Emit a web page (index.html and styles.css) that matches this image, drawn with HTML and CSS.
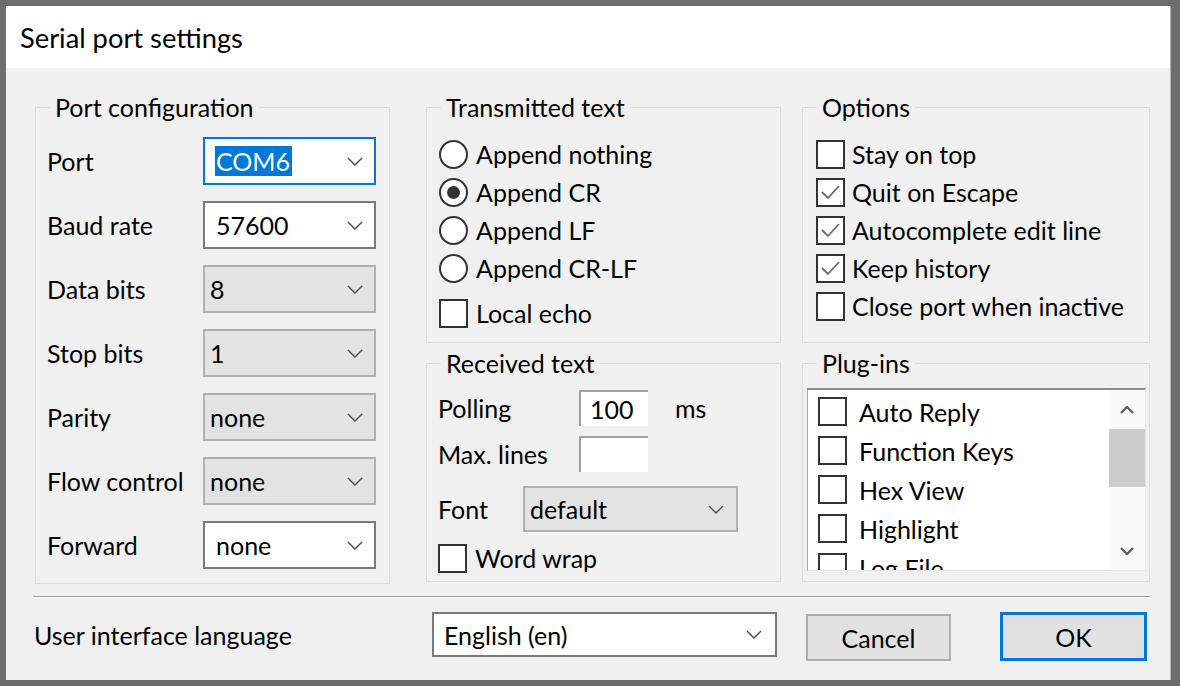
FILE: index.html
```html
<!DOCTYPE html>
<html>
<head>
<meta charset="utf-8">
<title>Serial port settings</title>
<link rel="stylesheet" href="styles.css">
</head>
<body>
<div class="dialog">
  <div class="titlebar">Serial port settings</div>
  <div class="content">
    <div class="groups">
      <div class="group port">
        <div class="gtitle">Port configuration</div>
        <div class="rows">
          <div class="row"><span class="lbl">Port</span><div class="combo focus"><span class="sel">COM6</span><svg class="chev" viewBox="0 0 16 9"><polyline points="1,1 8,8 15,1"/></svg></div></div>
          <div class="row"><span class="lbl">Baud rate</span><div class="combo"><span>57600</span><svg class="chev" viewBox="0 0 16 9"><polyline points="1,1 8,8 15,1"/></svg></div></div>
          <div class="row"><span class="lbl">Data bits</span><div class="combo dis"><span>8</span><svg class="chev" viewBox="0 0 16 9"><polyline points="1,1 8,8 15,1"/></svg></div></div>
          <div class="row"><span class="lbl">Stop bits</span><div class="combo dis"><span>1</span><svg class="chev" viewBox="0 0 16 9"><polyline points="1,1 8,8 15,1"/></svg></div></div>
          <div class="row"><span class="lbl">Parity</span><div class="combo dis"><span>none</span><svg class="chev" viewBox="0 0 16 9"><polyline points="1,1 8,8 15,1"/></svg></div></div>
          <div class="row"><span class="lbl">Flow control</span><div class="combo dis"><span>none</span><svg class="chev" viewBox="0 0 16 9"><polyline points="1,1 8,8 15,1"/></svg></div></div>
          <div class="row"><span class="lbl">Forward</span><div class="combo"><span>none</span><svg class="chev" viewBox="0 0 16 9"><polyline points="1,1 8,8 15,1"/></svg></div></div>
        </div>
      </div>

      <div class="col mid">
        <div class="group tx">
          <div class="gtitle">Transmitted text</div>
          <div class="opts">
            <div class="opt"><span class="radio"></span><span>Append nothing</span></div>
            <div class="opt"><span class="radio on"></span><span>Append CR</span></div>
            <div class="opt"><span class="radio"></span><span>Append LF</span></div>
            <div class="opt"><span class="radio"></span><span>Append CR-LF</span></div>
            <div class="opt echo"><span class="check"></span><span>Local echo</span></div>
          </div>
        </div>
        <div class="group rx">
          <div class="gtitle">Received text</div>
          <div class="frow first"><span class="flbl">Polling</span><span class="field">100</span><span class="unit">ms</span></div>
          <div class="frow"><span class="flbl">Max. lines</span><span class="field"></span></div>
          <div class="frow font"><span class="fontlbl">Font</span><div class="combo dis fontcombo"><span>default</span><svg class="chev" viewBox="0 0 16 9"><polyline points="1,1 8,8 15,1"/></svg></div></div>
          <div class="opt wrap"><span class="check"></span><span>Word wrap</span></div>
        </div>
      </div>

      <div class="col right">
        <div class="group options">
          <div class="gtitle">Options</div>
          <div class="opts">
            <div class="opt"><span class="check"></span><span>Stay on top</span></div>
            <div class="opt"><span class="check"><svg class="tick" viewBox="0 0 25 25"><polyline points="4,12 10,18 21,6"/></svg></span><span>Quit on Escape</span></div>
            <div class="opt"><span class="check"><svg class="tick" viewBox="0 0 25 25"><polyline points="4,12 10,18 21,6"/></svg></span><span>Autocomplete edit line</span></div>
            <div class="opt"><span class="check"><svg class="tick" viewBox="0 0 25 25"><polyline points="4,12 10,18 21,6"/></svg></span><span>Keep history</span></div>
            <div class="opt"><span class="check"></span><span>Close port when inactive</span></div>
          </div>
        </div>
        <div class="group plugins">
          <div class="gtitle">Plug-ins</div>
          <div class="listbox">
            <div class="items">
              <div class="item"><span class="check"></span><span>Auto Reply</span></div>
              <div class="item"><span class="check"></span><span>Function Keys</span></div>
              <div class="item"><span class="check"></span><span>Hex View</span></div>
              <div class="item"><span class="check"></span><span>Highlight</span></div>
              <div class="item"><span class="check"></span><span>Log File</span></div>
            </div>
            <div class="scrollbar">
              <div class="sbtn"><svg class="arrow" viewBox="0 0 14 8"><polyline points="1,7 7,1 13,7"/></svg></div>
              <div class="thumb"></div>
              <div class="track"></div>
              <div class="sbtn down"><svg class="arrow" viewBox="0 0 14 8"><polyline points="1,1 7,7 13,1"/></svg></div>
            </div>
          </div>
        </div>
      </div>
    </div>

    <div class="sep"></div>

    <div class="bottom">
      <span class="langlbl">User interface language</span>
      <div class="combo lang"><span>English (en)</span><svg class="chev" viewBox="0 0 16 9"><polyline points="1,1 8,8 15,1"/></svg></div>
      <div class="btn cancel">Cancel</div>
      <div class="btn ok">OK</div>
    </div>
  </div>
</div>
</body>
</html>
```

FILE: styles.css
```css
* { box-sizing: border-box; }

body {
  margin: 0;
  width: 1180px;
  height: 686px;
  overflow: hidden;
  background: #6d6d6d;
  font-family: Lato, "Noto Sans", sans-serif;
  font-size: 25px;
  color: #000;
}

.dialog {
  margin: 6px 0 0 6px;
  width: 1165px;
  height: 674px;
  display: flex;
  flex-direction: column;
  border-right: 1px solid #b4b4b4;
}

.titlebar {
  height: 62px;
  flex: none;
  background: #fff;
  padding-left: 14px;
  font-size: 27.3px;
  display: flex;
  align-items: center;
}

.content {
  flex: 1;
  background: #f0f0f0;
  padding: 39px 0 0 29px;
}

.groups {
  display: flex;
  align-items: flex-start;
}

.group {
  border: 1px solid #dcdcdc;
}

.gtitle {
  width: fit-content;
  height: 30px;
  line-height: 30px;
  margin-top: -16px;
  padding: 0 5px;
  background: #f0f0f0;
  white-space: nowrap;
}

/* Port configuration */
.port {
  width: 355px;
  height: 477px;
  padding: 0 13px 0 11px;
}

.port .gtitle { margin-left: 3px; }

.rows {
  display: flex;
  flex-direction: column;
  gap: 16px;
  margin-top: 15px;
}

.row {
  display: flex;
  align-items: center;
  height: 48px;
}

.lbl {
  width: 156px;
  flex: none;
  white-space: nowrap;
}

.combo {
  width: 173px;
  height: 48px;
  flex: none;
  border: 2px solid #7a7a7a;
  background: #fff;
  display: flex;
  align-items: center;
  justify-content: space-between;
  padding: 0 11px 0 11px;
}

.combo.dis {
  background: #e3e3e3;
  border-color: #b0b0b0;
  padding-left: 5px;
}

.combo.focus {
  border-color: #0078d7;
  padding-left: 10px;
}

.sel {
  background: #0078d7;
  color: #fff;
  line-height: 30px;
  padding: 0 2px 0 1px;
}

.chev {
  width: 16px;
  height: 9px;
  flex: none;
  fill: none;
  stroke: #4a4a4a;
  stroke-width: 1.4;
}

/* columns */
.col {
  display: flex;
  flex-direction: column;
  gap: 20px;
}

.mid {
  margin-left: 36px;
  width: 355px;
}

.right {
  margin-left: 21px;
  width: 348px;
}

/* option lists */
.opts {
  margin-top: 13px;
}

.opt {
  display: flex;
  align-items: center;
  height: 38px;
  gap: 8px;
  white-space: nowrap;
}

.tx {
  height: 236px;
  padding-left: 12px;
}

.tx .gtitle { margin-left: 2px; }

.tx .echo {
  margin-top: 7px;
}

.radio {
  width: 29px;
  height: 29px;
  flex: none;
  border-radius: 50%;
  border: 2px solid #333;
  background: #fff;
  display: flex;
  align-items: center;
  justify-content: center;
}

.radio.on::after {
  content: "";
  width: 13px;
  height: 13px;
  border-radius: 50%;
  background: #333;
}

.check {
  width: 29px;
  height: 29px;
  flex: none;
  border: 2px solid #333;
  background: #fff;
  display: flex;
}

.tick {
  width: 25px;
  height: 25px;
  fill: none;
  stroke: #6a6a6a;
  stroke-width: 1.8;
}

/* Received text */
.rx {
  height: 219px;
  padding-left: 11px;
}

.rx .gtitle { margin-left: 3px; }

.frow {
  display: flex;
  align-items: center;
  height: 36px;
  margin-top: 10px;
  white-space: nowrap;
}

.frow.first {
  margin-top: 12px;
}

.flbl {
  width: 141px;
  flex: none;
}

.field {
  width: 69px;
  height: 36px;
  flex: none;
  background: #fff;
  border-top: 2px solid #a0a0a0;
  border-left: 2px solid #a0a0a0;
  padding-left: 9px;
  display: flex;
  align-items: center;
}

.unit {
  margin-left: 27px;
}

.frow.font {
  height: 46px;
  margin-top: 14px;
}

.fontlbl {
  width: 85px;
  flex: none;
}

.fontcombo {
  width: 215px;
  height: 46px;
  padding-left: 8px;
  padding-right: 12px;
}

.rx .wrap {
  margin-top: 7px;
}

/* Options */
.options {
  height: 236px;
  padding-left: 13px;
}

.options .gtitle { margin-left: 1px; }

.options .opt {
  gap: 7px;
}

/* Plug-ins */
.plugins {
  height: 219px;
  padding-left: 4px;
}

.plugins .gtitle { margin-left: 10px; }

.listbox {
  margin-top: 10px;
  width: 339px;
  height: 183px;
  background: #fff;
  border-top: 2px solid #8c8c8c;
  border-left: 1px solid #a8a8a8;
  border-right: 1px solid #e6e6e6;
  border-bottom: 1px solid #e6e6e6;
  display: flex;
  overflow: hidden;
}

.items {
  flex: 1;
  padding: 2px 0 0 10px;
  overflow: hidden;
}

.item {
  display: flex;
  align-items: center;
  height: 39px;
  gap: 12px;
  white-space: nowrap;
}

.scrollbar {
  width: 36px;
  flex: none;
  display: flex;
  flex-direction: column;
  background: #fafafa;
}

.sbtn {
  height: 39px;
  flex: none;
  display: flex;
  align-items: center;
  justify-content: center;
}

.sbtn.down {
  height: 38px;
}

.arrow {
  width: 14px;
  height: 8px;
  fill: none;
  stroke: #606060;
  stroke-width: 2.4;
}

.thumb {
  height: 58px;
  flex: none;
  background: #cdcdcd;
}

.track {
  flex: 1;
}

/* bottom */
.sep {
  margin: 12px 0 0 -2px;
  width: 1117px;
  height: 2px;
  border-top: 1px solid #a0a0a0;
  border-bottom: 1px solid #fff;
}

.bottom {
  margin-top: 14px;
  display: flex;
  align-items: flex-start;
  height: 49px;
}

.langlbl {
  width: 398px;
  flex: none;
  margin-left: -1px;
  height: 45px;
  display: flex;
  align-items: center;
  white-space: nowrap;
}

.combo.lang {
  width: 345px;
  height: 45px;
  padding-left: 10px;
  padding-right: 13px;
}

.btn {
  display: flex;
  align-items: center;
  justify-content: center;
  background: #e1e1e1;
  border: 2px solid #adadad;
}

.cancel {
  margin: 2px 0 0 29px;
  width: 145px;
  height: 47px;
}

.ok {
  margin-left: 49px;
  width: 147px;
  height: 49px;
  border: 3px solid #0078d7;
}
```
